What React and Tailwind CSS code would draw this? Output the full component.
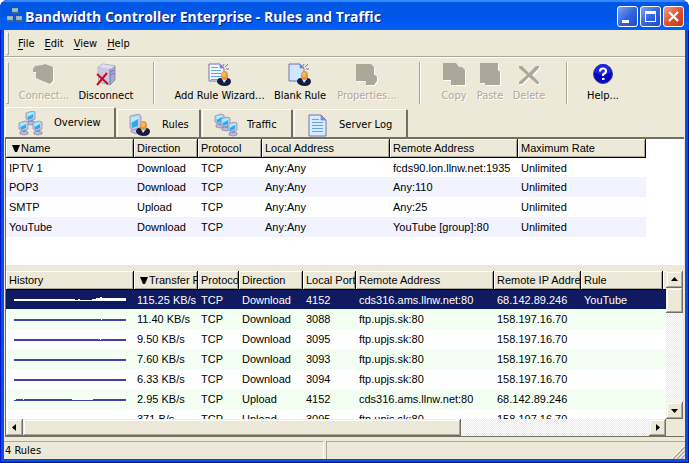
import { useState } from 'react';
import clsx from 'clsx';

const RULE_COLUMNS = ['Name', 'Direction', 'Protocol', 'Local Address', 'Remote Address', 'Maximum Rate'];

const RULES = [
    ['IPTV 1', 'Download', 'TCP', 'Any:Any', 'fcds90.lon.llnw.net:1935', 'Unlimited'],
    ['POP3', 'Download', 'TCP', 'Any:Any', 'Any:110', 'Unlimited'],
    ['SMTP', 'Upload', 'TCP', 'Any:Any', 'Any:25', 'Unlimited'],
    ['YouTube', 'Download', 'TCP', 'Any:Any', 'YouTube [group]:80', 'Unlimited'],
];

const TRAFFIC_COLUMNS = ['History', 'Transfer Rate', 'Protocol', 'Direction', 'Local Port', 'Remote Address', 'Remote IP Address', 'Rule'];

// history is the outline of the bandwidth graph in a 112x8 box
const TRAFFIC = [
    { history: 'M0 3H61V4H64V3H66V4H78V3H82V2H86V1H88V2H112V5H78V5H0Z', cells: ['115.25 KB/s', 'TCP', 'Download', '4152', 'cds316.ams.llnw.net:80', '68.142.89.246', 'YouTube'] },
    { history: 'M0 4H87V5H88V4H112V6H0Z', cells: ['11.40 KB/s', 'TCP', 'Download', '3088', 'ftp.upjs.sk:80', '158.197.16.70', ''] },
    { history: 'M0 4H86V5H87V4H112V6H0Z', cells: ['9.50 KB/s', 'TCP', 'Download', '3095', 'ftp.upjs.sk:80', '158.197.16.70', ''] },
    { history: 'M0 4H112V6H0Z', cells: ['7.60 KB/s', 'TCP', 'Download', '3093', 'ftp.upjs.sk:80', '158.197.16.70', ''] },
    { history: 'M0 4H112V6H0Z', cells: ['6.33 KB/s', 'TCP', 'Download', '3094', 'ftp.upjs.sk:80', '158.197.16.70', ''] },
    { history: 'M0 5H2V4H9V5H10V4H58V5H79V4H112V6H0Z', cells: ['2.95 KB/s', 'TCP', 'Upload', '4152', 'cds316.ams.llnw.net:80', '68.142.89.246', ''] },
    { history: 'M0 4H81V5H0Z', cells: ['371 B/s', 'TCP', 'Upload', '3095', 'ftp.upjs.sk:80', '158.197.16.70', ''] },
];

const RAISED = 'bg-[#ece9d8] shadow-[inset_-1px_-1px_#716f64,inset_1px_1px_#f1efe2,inset_-2px_-2px_#aca899,inset_2px_2px_#fff]';
const TRACK = 'bg-[conic-gradient(#fff_25%,#ece9d8_0_50%,#fff_0_75%,#ece9d8_0)] bg-[length:2px_2px]';

/* ---------- Icons ---------- */

function Pc({ x, y }) {
    return (
        <g transform={`translate(${x} ${y})`}>
            <path d="M2 11l5-2 3 2v2l-4 1-4-1z" fill="#b9b9d8" stroke="#8585ad" strokeWidth=".7" />
            <path d="M5 8h3v3H5z" fill="#9292bb" />
            <path d="M1 2l6-2 3 1v7L4 10 1 8z" fill="#c9c9e4" stroke="#8787ae" strokeWidth=".7" />
            <path d="M2 2l6-1v6L3 9z" fill="#2da9f0" />
            <path d="M2 2l6-1v2L2.500 6z" fill="#a8f0ff" />
        </g>
    );
}

function Person({ x, y }) {
    return (
        <g transform={`translate(${x} ${y})`}>
            <path d="M0 11q0-4 4-4l3 2 3-2q4 0 4 4-1 4-6 4-6 0-8-4z" fill="#171a43" />
            <path d="M5 8l2 4 3-4z" fill="#dde3fa" />
            <ellipse cx="7.500" cy="4.500" rx="3.500" ry="4.500" fill="#e49535" />
            <ellipse cx="7" cy="3.500" rx="2" ry="2.500" fill="#f7b768" />
        </g>
    );
}

function Page({ lines }) {
    return (
        <g>
            <path d="M1 1h11l4 4v13H1z" fill={lines ? '#f2f8ff' : '#cfe6ff'} stroke="#7174b6" />
            <path d="M12 1v4h4z" fill="#8e90c8" stroke="#7174b6" strokeWidth=".6" />
            {lines && <path d="M3 4.500h7M3 7.500h10M3 10.500h10M3 13.500h10M3 16.500h8" stroke="#63a5ea" />}
        </g>
    );
}

function RuleIcon({ lines }) {
    return (
        <svg width="24" height="24" viewBox="0 0 24 24" aria-hidden="true">
            <Page lines={lines} />
            <path d="M15 3l1-2M17 4l3-3M18 6h3" stroke="#777" />
            <Person x={9} y={8} />
        </svg>
    );
}

function Shape({ d }) {
    return (
        <svg width="24" height="24" viewBox="0 0 24 24" aria-hidden="true">
            <path d={d} fill="#fff" transform="translate(1 1)" />
            <path d={d} fill="#aca899" />
        </svg>
    );
}

function DisconnectIcon() {
    return (
        <svg width="24" height="24" viewBox="0 0 24 24" aria-hidden="true">
            <path d="M4 4l5-3 12 2v14l-5 5-11-3z" fill="#a9a9cf" stroke="#77779f" strokeWidth=".7" />
            <path d="M4 4l12 2v16l-11-3z" fill="#c8c8e3" />
            <path d="M4 4l5-3 12 2-5 3z" fill="#dddded" />
            <path d="M16 6v16M17 9l3-2M17 12l3-2" stroke="#73739c" />
            <path d="M3 11l11 10M13 10L3 22" stroke="#cc0c16" strokeWidth="2" />
        </svg>
    );
}

function HelpIcon() {
    return (
        <svg width="24" height="24" viewBox="0 0 24 24" aria-hidden="true">
            <circle cx="12" cy="11" r="9.500" fill="#0808c4" stroke="#44447c" />
            <path d="M4 9a8 8 0 0 1 16 0q-8 5-16 0z" fill="#2020e8" />
            <path d="M9 8.500q0-3 3-3t3 2.500q0 2-3 3.500v1.500" stroke="#fff" strokeWidth="2.200" fill="none" />
            <path d="M11 15h2.500v2H11z" fill="#fff" />
        </svg>
    );
}

function OverviewIcon() {
    return (
        <svg width="25" height="25" viewBox="0 0 25 25" aria-hidden="true">
            <Pc x={7} y={0} />
            <Pc x={0} y={10} />
            <Pc x={14} y={10} />
        </svg>
    );
}

function RulesIcon() {
    return (
        <svg width="25" height="25" viewBox="0 0 25 25" aria-hidden="true">
            <path d="M3 17l8-2 3 3-6 3-5-2z" fill="#c2c2dd" stroke="#8d8db3" strokeWidth=".7" />
            <path d="M2 3l9-2 2 2v11l-8 3-3-2z" fill="#c9c9e4" stroke="#8787ae" strokeWidth=".7" />
            <path d="M3 4l7-1v10l-6 2z" fill="#2da9f0" />
            <path d="M3 4l7-1v3l-7 4z" fill="#a8f0ff" />
            <Person x={8} y={8} />
        </svg>
    );
}

function TrafficIcon() {
    return (
        <svg width="25" height="25" viewBox="0 0 25 25" aria-hidden="true">
            <Pc x={1} y={1} />
            <Pc x={7} y={4} />
            <Pc x={14} y={9} />
        </svg>
    );
}

function LogIcon() {
    return (
        <svg width="25" height="25" viewBox="0 0 25 25" aria-hidden="true">
            <path d="M4 2h12l5 5v16H4z" fill="#d8ecff" stroke="#7174b6" />
            <path d="M16 2v5h5z" fill="#8e90c8" stroke="#7174b6" strokeWidth=".6" />
            <path d="M7 6.500h7M7 9.500h11M7 12.500h11M7 15.500h11M7 18.500h11" stroke="#63a5ea" />
        </svg>
    );
}

function AppIcon() {
    return (
        <svg width="16" height="16" viewBox="0 0 16 16" className="shrink-0" aria-hidden="true">
            {[[5, 1], [0, 9], [9, 9]].map(([x, y]) => (
                <g key={`${x}-${y}`} transform={`translate(${x} ${y})`}>
                    <path d="M0 0h6v4H0z" fill="#a9a9a9" />
                    <path d="M1 1h4v2H1z" fill="#5fd8f8" />
                    <path d="M0 4h7v2H0z" fill="#55606e" />
                </g>
            ))}
        </svg>
    );
}

/* ---------- Pieces ---------- */

function TitleButton({ label, close, children }) {
    return (
        <button
            aria-label={label}
            className={clsx(
                'flex size-[21px] items-center justify-center rounded-[3px] border border-white',
                close ? 'bg-linear-to-br from-[#f0a088] via-[#e0532c] to-[#c33a12]' : 'bg-linear-to-br from-[#7da4f5] via-[#3466e0] to-[#1c4bc8]'
            )}
        >
            <svg width="19" height="19" viewBox="0 0 19 19" aria-hidden="true">{children}</svg>
        </button>
    );
}

function ToolButton({ label, icon, width, disabled }) {
    return (
        <button
            disabled={disabled}
            className={clsx('flex shrink-0 flex-col items-center gap-px whitespace-nowrap', width, disabled && 'text-[#aca899] [text-shadow:1px_1px_#fff]')}
        >
            {icon}
            <span className="leading-4">{label}</span>
        </button>
    );
}

function Separator() {
    return (
        <div className="flex w-[33px] shrink-0 justify-center self-stretch">
            <div className="w-[2px] border-r border-white bg-[#aca899]" />
        </div>
    );
}

function Grip() {
    return <div className="w-[3px] shrink-0 self-stretch border-t border-r border-b border-l border-t-white border-r-[#aca899] border-b-[#aca899] border-l-white" />;
}

function HeaderCell({ children, sorted }) {
    return (
        <th className="h-[19px] overflow-hidden border-r border-b border-black bg-[#ece9d8] pl-[3px] text-left font-normal whitespace-nowrap shadow-[inset_1px_1px_#fff,inset_-1px_-1px_#aca899]">
            {sorted && (
                <svg width="8" height="8" viewBox="0 0 8 8" className="mr-px ml-[3px] inline-block align-[-1px]" aria-label="sorted">
                    <path d="M0 0h8L5 7H3z" />
                </svg>
            )}
            {children}
        </th>
    );
}

function Cell({ children }) {
    return <td className="overflow-hidden pl-[3px] whitespace-nowrap">{children}</td>;
}

function ScrollButton({ label, d }) {
    return (
        <button aria-label={label} className={clsx('flex size-[17px] shrink-0 items-center justify-center', RAISED)}>
            <svg width="7" height="7" viewBox="0 0 7 7" aria-hidden="true"><path d={d} /></svg>
        </button>
    );
}

const TABS = [
    { name: 'Overview', icon: <OverviewIcon />, width: 'w-[111px]', gap: 'gap-[11px]' },
    { name: 'Rules', icon: <RulesIcon />, width: 'w-[84px]', gap: 'gap-[9px]' },
    { name: 'Traffic', icon: <TrafficIcon />, width: 'w-[91px]', gap: 'gap-[9px]' },
    { name: 'Server Log', icon: <LogIcon />, width: 'w-[114px]', gap: 'gap-[9px]' },
];

export default function App() {
    const [tab, setTab] = useState('Overview');
    const [selected, setSelected] = useState(0);

    return (
        <div className="h-screen bg-white">
            <div className="flex h-full min-h-[400px] flex-col overflow-hidden rounded-t-lg bg-[#0a4be0] font-['DejaVu_Sans_Condensed','DejaVu_Sans',sans-serif] text-[11px] text-black shadow-[inset_1px_0_#0019cf,inset_-1px_0_#00138c,inset_0_-1px_#00138c]">
                {/* Title bar */}
                <header className="flex h-[30px] shrink-0 items-center gap-[2px] bg-linear-to-b from-[#0058e6] via-[#0055e5] to-[#0060fc] pr-[5px] pl-[7px] shadow-[inset_0_2px_1px_#3a8bff]">
                    <AppIcon />
                    <h1 className="flex-1 truncate pt-[2px] font-['Open_Sans',sans-serif] text-[14px] font-bold text-white [text-shadow:1px_1px_#0a1883]">
                        Bandwidth Controller Enterprise - Rules and Traffic
                    </h1>
                    <div className="flex gap-[2px] pt-[3px]">
                        <TitleButton label="Minimize"><path d="M4 13h7v3H4z" fill="#fff" /></TitleButton>
                        <TitleButton label="Maximize"><path d="M4 4h11v11H4z M5 7v7h9V7z" fill="#fff" fillRule="evenodd" /></TitleButton>
                        <TitleButton label="Close" close><path d="M5 5l9 9M14 5l-9 9" stroke="#fff" strokeWidth="2.200" /></TitleButton>
                    </div>
                </header>

                <div className="mx-1 mb-1 flex min-h-0 flex-1 flex-col bg-[#ece9d8]">
                    {/* Menu */}
                    <nav className="flex h-7 shrink-0 items-center border-b border-white px-[2px] py-[2px] shadow-[inset_0_-1px_#aca899]">
                        <Grip />
                        <div className="flex gap-[10px] pt-px pl-[9px]">
                            {['File', 'Edit', 'View', 'Help'].map(item => (
                                <button key={item}><u className="underline-offset-2">{item[0]}</u>{item.slice(1)}</button>
                            ))}
                        </div>
                    </nav>

                    {/* Toolbar */}
                    <div className="flex h-[49px] shrink-0 items-start px-[2px] pt-1 pb-[3px]">
                        <Grip />
                        <div className="flex items-center self-stretch pl-1">
                            <ToolButton label="Connect..." disabled width="w-[62px]" icon={<Shape d="M1 6l2-3 7-1 3-1 8 3v14l-3 3-10-4-4-2V9H1z" />} />
                            <ToolButton label="Disconnect" width="w-[62px]" icon={<DisconnectIcon />} />
                            <Separator />
                            <ToolButton label="Add Rule Wizard..." width="w-[99px]" icon={<RuleIcon lines />} />
                            <ToolButton label="Blank Rule" width="w-[62px]" icon={<RuleIcon />} />
                            <ToolButton label="Properties..." disabled width="w-[72px]" icon={<Shape d="M1 1h15l3 3v7l3 3v4l-3 4h-8v-4H1z" />} />
                            <Separator />
                            <ToolButton label="Copy" disabled width="w-9" icon={<Shape d="M1 0h13l3 4h3l3 3v15H9v-5H1z" />} />
                            <ToolButton label="Paste" disabled width="w-9" icon={<Shape d="M2 0h18v7l2 2v13H7v-2H2z" />} />
                            <ToolButton label="Delete" disabled width="w-[42px]" icon={<Shape d="M2 3h3l7 7 7-7h3v2l-7 7 7 7v2h-2l-8-7-7 7H2v-2l8-7-8-7z" />} />
                            <Separator />
                            <ToolButton label="Help..." width="w-10" icon={<HelpIcon />} />
                        </div>
                    </div>

                    {/* Tabs */}
                    <div role="tablist" className="flex h-[30px] shrink-0 items-end gap-px pl-px">
                        {TABS.map(({ name, icon, width, gap }) => (
                            <button
                                key={name}
                                role="tab"
                                aria-selected={tab === name}
                                onClick={() => setTab(name)}
                                className={clsx(
                                    'flex shrink-0 items-center rounded-t-[2px] border-t border-r-2 border-l border-t-white border-r-[#716f64] border-l-white whitespace-nowrap',
                                    width, gap,
                                    tab === name ? 'h-[30px] pt-[2px] pl-3' : 'h-7 pt-1 pl-[10px]'
                                )}
                            >
                                {icon}
                                {name}
                            </button>
                        ))}
                    </div>

                    <main className="mx-px flex min-h-0 flex-1 flex-col border-t-2 border-b border-l border-[#716f64] font-['Liberation_Sans',Arial,sans-serif]">
                        {/* Rules */}
                        <section className="h-[126px] shrink-0 overflow-hidden bg-white">
                            <table className="w-[640px] table-fixed border-separate border-spacing-0 leading-4">
                                <colgroup>
                                    <col className="w-32" />
                                    <col className="w-16" />
                                    <col className="w-16" />
                                    <col className="w-32" />
                                    <col className="w-32" />
                                    <col className="w-32" />
                                </colgroup>
                                <thead>
                                    <tr>
                                        {RULE_COLUMNS.map((name, i) => <HeaderCell key={name} sorted={i === 0}>{name}</HeaderCell>)}
                                    </tr>
                                </thead>
                                <tbody>
                                    {RULES.map(row => (
                                        <tr key={row[0]} className="h-5 first:h-[19px] even:bg-[#f2f3ff]">
                                            {row.map((value, i) => <Cell key={i}>{value}</Cell>)}
                                        </tr>
                                    ))}
                                </tbody>
                            </table>
                        </section>

                        <div className="h-[6px] shrink-0" />

                        {/* Traffic */}
                        <section className="flex min-h-0 flex-1">
                            <div className="flex min-w-0 flex-1 flex-col">
                                <div className="min-h-0 flex-1 overflow-hidden bg-white">
                                    <table className="w-full table-fixed border-separate border-spacing-0 leading-4">
                                        <colgroup>
                                            <col className="w-32" />
                                            <col className="w-16" />
                                            <col className="w-[41px]" />
                                            <col className="w-16" />
                                            <col className="w-[53px]" />
                                            <col className="w-[138px]" />
                                            <col className="w-[87px]" />
                                            <col />
                                            <col className="w-[3px]" />
                                        </colgroup>
                                        <thead>
                                            <tr>
                                                {TRAFFIC_COLUMNS.map((name, i) => <HeaderCell key={name} sorted={i === 1}>{name}</HeaderCell>)}
                                                <td className="border-b border-black bg-[#ece9d8] shadow-[inset_1px_1px_#fff]" />
                                            </tr>
                                        </thead>
                                        <tbody>
                                            {TRAFFIC.map(({ history, cells }, row) => (
                                                <tr
                                                    key={row}
                                                    onClick={() => setSelected(row)}
                                                    className={clsx('h-5 first:h-[19px]', row === selected ? 'bg-[#101a60] text-white' : 'even:bg-[#f3fff3]')}
                                                >
                                                    <td className="pl-2">
                                                        <svg width="112" height="8" viewBox="0 0 112 8" className="block" aria-label="history">
                                                            <path d={history} fill={row === selected ? '#fff' : '#4340a8'} shapeRendering="crispEdges" />
                                                        </svg>
                                                    </td>
                                                    {cells.map((value, i) => <Cell key={i}>{value}</Cell>)}
                                                    <td />
                                                </tr>
                                            ))}
                                        </tbody>
                                    </table>
                                </div>
                                <div className={clsx('flex h-[17px] shrink-0', TRACK)}>
                                    <ScrollButton label="Scroll left" d="M5 0v7L1 3.500z" />
                                    <div className="flex-1"><div className={clsx('h-full w-[70%]', RAISED)} /></div>
                                    <ScrollButton label="Scroll right" d="M2 0v7l4-3.500z" />
                                </div>
                            </div>
                            <div className="flex w-[18px] shrink-0 flex-col pr-px">
                                <div className={clsx('flex min-h-0 flex-1 flex-col', TRACK)}>
                                    <ScrollButton label="Scroll up" d="M0 5h7L3.500 1z" />
                                    <div className="flex-1"><div className={clsx('h-[25px]', RAISED)} /></div>
                                    <ScrollButton label="Scroll down" d="M0 2h7L3.500 6z" />
                                </div>
                                <div className="h-[17px] shrink-0" />
                            </div>
                        </section>
                    </main>

                    {/* Status bar */}
                    <footer className="mt-1 flex h-[18px] shrink-0 gap-[2px] leading-4">
                        <div className="w-[47%] border-t border-r border-t-[#aca899] border-r-white pt-px pl-px">4 Rules</div>
                        <div className="flex flex-1 items-end justify-end border-t border-l border-[#aca899]">
                            <svg width="13" height="13" viewBox="0 0 13 13" aria-hidden="true">
                                <path d="M1 13L13 1M5 13l8-8M9 13l4-4" stroke="#aca899" strokeWidth="1.500" />
                                <path d="M0 12L12 0M4 12l8-8M8 12l4-4" stroke="#fff" />
                            </svg>
                        </div>
                    </footer>
                </div>
            </div>
        </div>
    );
}
